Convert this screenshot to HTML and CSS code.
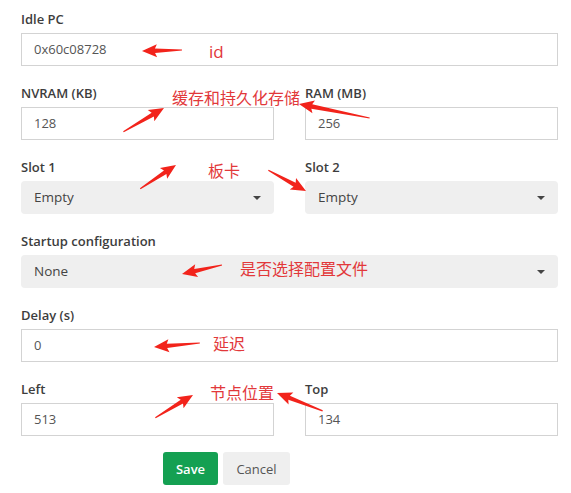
FILE: index.html
```html
<!DOCTYPE html>
<html lang="zh">
<head>
<meta charset="utf-8">
<title>Node settings</title>
<link rel="stylesheet" href="styles.css">
</head>
<body>
<div class="page">
  <form class="form">
    <div class="group">
      <label class="label">Idle PC</label>
      <div class="input">0x60c08728</div>
    </div>
    <div class="row">
      <div class="group">
        <label class="label">NVRAM (KB)</label>
        <div class="input">128</div>
      </div>
      <div class="group">
        <label class="label">RAM (MB)</label>
        <div class="input">256</div>
      </div>
    </div>
    <div class="row">
      <div class="group">
        <label class="label">Slot 1</label>
        <div class="select"><span>Empty</span><i class="caret"></i></div>
      </div>
      <div class="group">
        <label class="label">Slot 2</label>
        <div class="select"><span>Empty</span><i class="caret"></i></div>
      </div>
    </div>
    <div class="group">
      <label class="label">Startup configuration</label>
      <div class="select"><span>None</span><i class="caret"></i></div>
    </div>
    <div class="group">
      <label class="label">Delay (s)</label>
      <div class="input">0</div>
    </div>
    <div class="row">
      <div class="group">
        <label class="label">Left</label>
        <div class="input">513</div>
      </div>
      <div class="group">
        <label class="label">Top</label>
        <div class="input">134</div>
      </div>
    </div>
    <div class="actions">
      <button type="button" class="btn btn-save">Save</button>
      <button type="button" class="btn btn-cancel">Cancel</button>
    </div>
  </form>

  <div class="notes">
    <svg class="arrows" width="571" height="493" viewBox="0 0 571 493">
      <g fill="#f2231b">
        <g transform="translate(142 51) rotate(-1.4)"><polygon points="0,0 15,-6.5 13,-2.2 40,-0.6 40,0.6 13,2.2 15,6.5"/></g>
        <g transform="translate(164 108) rotate(149.7)"><polygon points="0,0 15,-6.5 13,-2.2 47,-0.6 47,0.6 13,2.2 15,6.5"/></g>
        <g transform="translate(299 104) rotate(11.2)"><polygon points="0,0 15,-6.5 13,-2.2 72,-0.6 72,0.6 13,2.2 15,6.5"/></g>
        <g transform="translate(176 165) rotate(146.3)"><polygon points="0,0 15,-6.5 13,-2.2 43,-0.6 43,0.6 13,2.2 15,6.5"/></g>
        <g transform="translate(306 191) rotate(-151.1)"><polygon points="0,0 15,-6.5 13,-2.2 43,-0.6 43,0.6 13,2.2 15,6.5"/></g>
        <g transform="translate(182 274) rotate(-12.7)"><polygon points="0,0 15,-6.5 13,-2.2 41,-0.6 41,0.6 13,2.2 15,6.5"/></g>
        <g transform="translate(154 347) rotate(-5)"><polygon points="0,0 15,-6.5 13,-2.2 46,-0.6 46,0.6 13,2.2 15,6.5"/></g>
        <g transform="translate(193 395) rotate(148.8)"><polygon points="0,0 15,-6.5 13,-2.2 44,-0.6 44,0.6 13,2.2 15,6.5"/></g>
        <g transform="translate(277 393) rotate(21.4)"><polygon points="0,0 15,-6.5 13,-2.2 49,-0.6 49,0.6 13,2.2 15,6.5"/></g>
      </g>
    </svg>
    <span class="note note-id">id</span>
    <span class="note note-mem">缓存和持久化存储</span>
    <span class="note note-slot">板卡</span>
    <span class="note note-cfg">是否选择配置文件</span>
    <span class="note note-delay">延迟</span>
    <span class="note note-pos">节点位置</span>
  </div>
</div>
</body>
</html>
```

FILE: styles.css
```css
* { box-sizing: border-box; }

html, body {
  margin: 0;
  padding: 0;
  background: #ffffff;
}

body {
  font-family: "Open Sans", "Noto Sans CJK SC", sans-serif;
  color: #444444;
}

.page {
  position: relative;
  width: 571px;
  height: 493px;
  overflow: hidden;
}

.form {
  padding: 11px 13px 0 21px;
}

.row {
  display: grid;
  grid-template-columns: 253px 253px;
  column-gap: 31px;
}

.group {
  margin-bottom: 19px;
}

.label {
  display: block;
  font-size: 13px;
  font-weight: 600;
  line-height: 16px;
  color: #3d3d3d;
  margin-bottom: 6px;
}

.input {
  height: 33px;
  border: 1px solid #d3d3d3;
  background: #ffffff;
  padding: 0 12px;
  font-size: 13px;
  line-height: 31px;
  color: #555555;
}

.select {
  height: 33px;
  border-radius: 4px;
  background: #efefef;
  padding: 0 13px 0 13px;
  font-size: 13.5px;
  line-height: 33px;
  color: #444444;
  display: flex;
  align-items: center;
  justify-content: space-between;
}

.caret {
  width: 0;
  height: 0;
  border-left: 4px solid transparent;
  border-right: 4px solid transparent;
  border-top: 4px solid #444444;
}

.actions {
  display: flex;
  gap: 5px;
  padding-left: 142px;
  margin-top: -3px;
}

.btn {
  height: 33px;
  border: none;
  border-radius: 3px;
  font-family: "Open Sans", sans-serif;
  font-size: 13px;
  padding: 0;
}

.btn-save {
  width: 55px;
  background: #14a052;
  color: #ffffff;
  font-weight: 600;
}

.btn-cancel {
  width: 67px;
  background: #efefef;
  color: #555555;
}

.notes .arrows {
  position: absolute;
  left: 0;
  top: 0;
}

.note {
  position: absolute;
  color: #e2383a;
  font-family: "Noto Sans CJK SC", sans-serif;
  font-size: 16px;
  line-height: 16px;
  white-space: nowrap;
}

.note-id {
  font-family: "Open Sans", sans-serif;
  font-size: 17px;
  line-height: 17px;
  left: 209px;
  top: 43px;
}

.note-mem { left: 172px; top: 89px; }
.note-slot { left: 208px; top: 162px; }
.note-cfg { left: 240px; top: 260px; }
.note-delay { left: 213px; top: 335px; }
.note-pos { left: 210px; top: 384px; }
```
